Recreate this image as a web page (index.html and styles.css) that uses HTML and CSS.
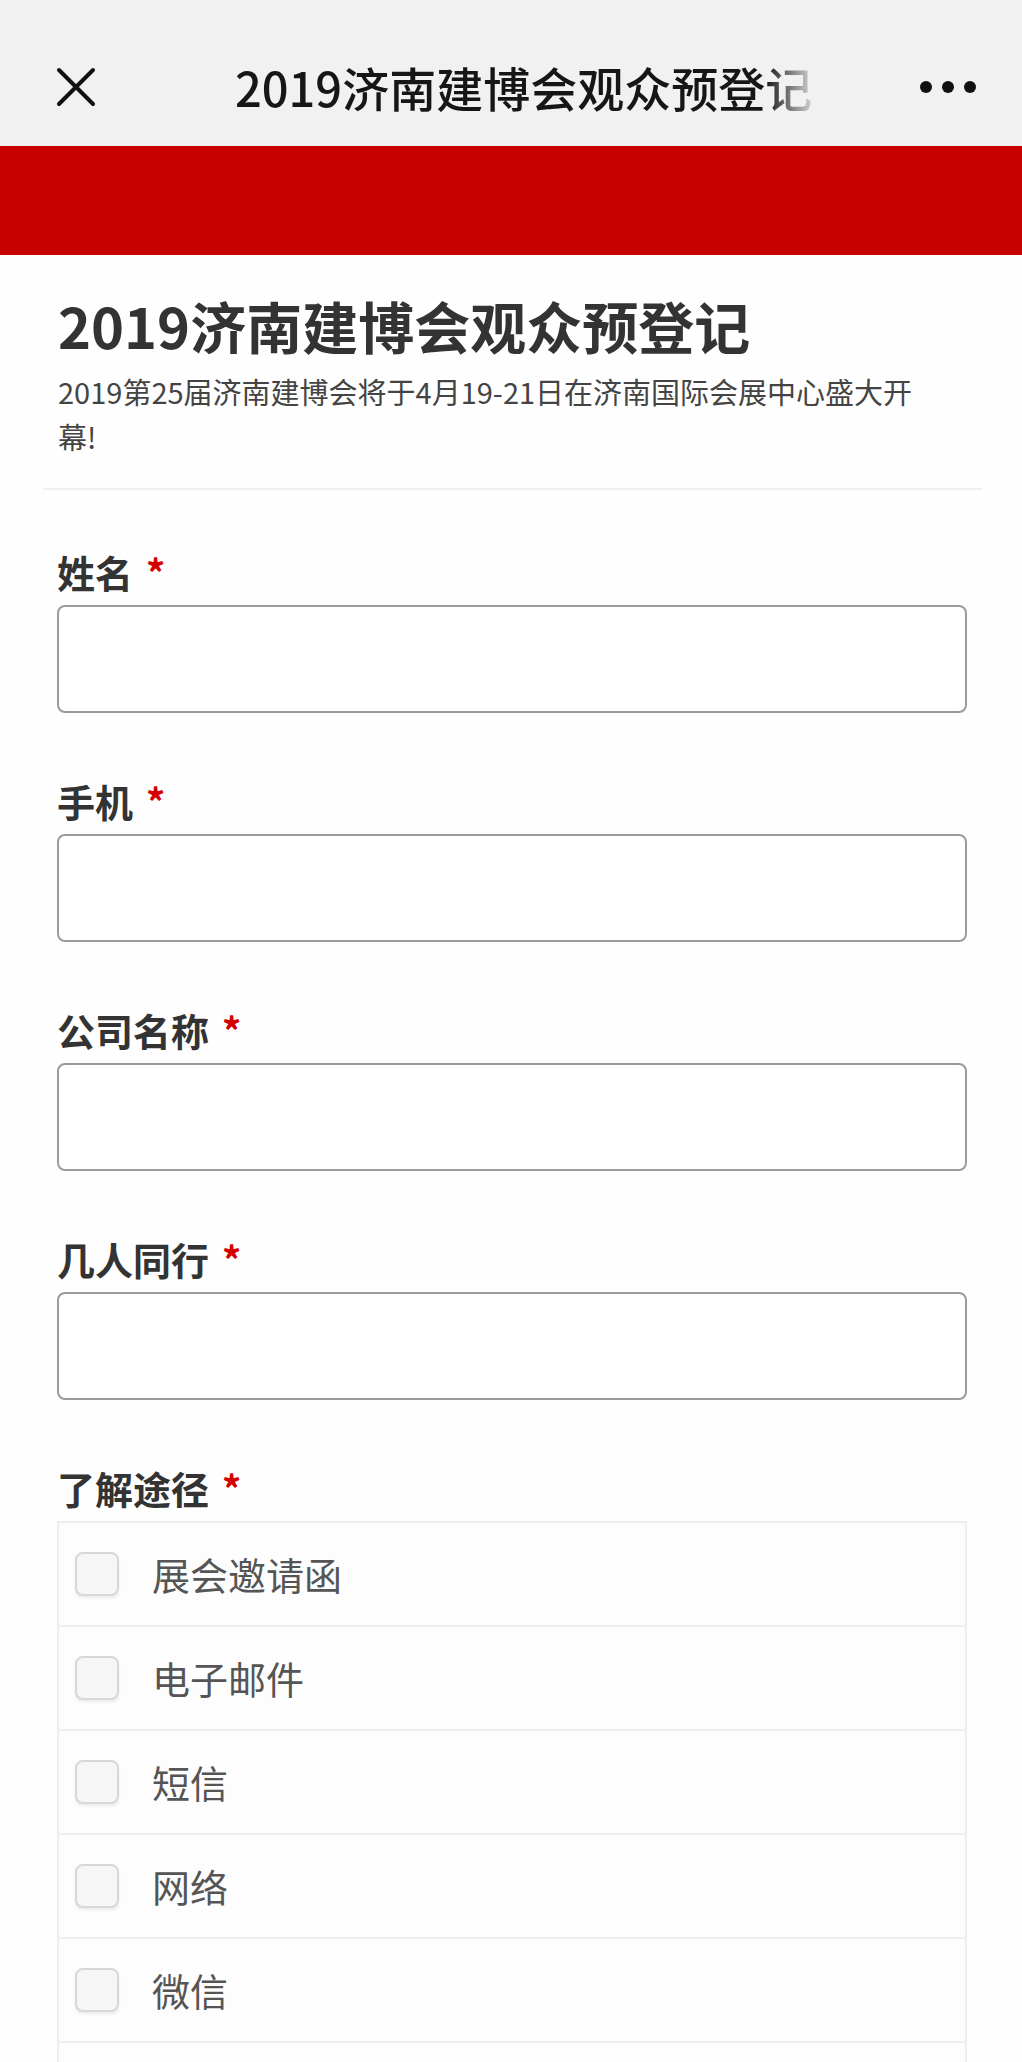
FILE: index.html
```html
<!DOCTYPE html>
<html lang="zh-CN">
<head>
<meta charset="utf-8">
<title>2019济南建博会观众预登记</title>
<link rel="stylesheet" href="styles.css">
</head>
<body>
<div class="topbar">
  <span class="close" aria-label="关闭">
    <svg width="42" height="42" viewBox="0 0 42 42"><path d="M4 4 L38 38 M38 4 L4 38" stroke="#111" stroke-width="4" stroke-linecap="round" fill="none"/></svg>
  </span>
  <div class="tb-title"><span>2019济南建博会观众预登记</span></div>
  <span class="more" aria-label="更多"><i></i><i></i><i></i></span>
</div>
<div class="banner"></div>
<main class="form">
  <header class="form-head">
    <h1 class="form-title">2019济南建博会观众预登记</h1>
    <p class="form-desc">2019第25届济南建博会将于4月19-21日在济南国际会展中心盛大开幕!</p>
  </header>
  <div class="fields">
    <div class="field">
      <div class="lbl">姓名<span class="req">*</span></div>
      <div class="input"></div>
    </div>
    <div class="field">
      <div class="lbl">手机<span class="req">*</span></div>
      <div class="input"></div>
    </div>
    <div class="field">
      <div class="lbl">公司名称<span class="req">*</span></div>
      <div class="input"></div>
    </div>
    <div class="field">
      <div class="lbl">几人同行<span class="req">*</span></div>
      <div class="input"></div>
    </div>
    <div class="field">
      <div class="lbl">了解途径<span class="req">*</span></div>
      <ul class="options">
        <li class="opt"><span class="cb"></span><span class="opt-text">展会邀请函</span></li>
        <li class="opt"><span class="cb"></span><span class="opt-text">电子邮件</span></li>
        <li class="opt"><span class="cb"></span><span class="opt-text">短信</span></li>
        <li class="opt"><span class="cb"></span><span class="opt-text">网络</span></li>
        <li class="opt"><span class="cb"></span><span class="opt-text">微信</span></li>
        <li class="opt"><span class="cb"></span><span class="opt-text">其他</span></li>
      </ul>
    </div>
  </div>
</main>
</body>
</html>
```
FILE: styles.css
```css
html, body {
  margin: 0;
  padding: 0;
  background: #fefefe;
}
body {
  font-family: "Noto Sans CJK SC", "Noto Sans", sans-serif;
  color: #333;
}
.topbar {
  height: 146px;
  background: #f1f1f1;
  display: flex;
  align-items: center;
  padding-left: 55px;
  padding-top: 28px;
  box-sizing: border-box;
}
.close {
  width: 42px;
  height: 42px;
  display: block;
}
.close svg { display: block; }
.tb-title {
  margin-left: 138px;
  width: 578px;
  overflow: hidden;
  white-space: nowrap;
  font-size: 47px;
  font-weight: 500;
  color: #161616;
  line-height: 60px;
  -webkit-mask-image: linear-gradient(to right, #000 calc(100% - 48px), rgba(0,0,0,0.12) 100%);
  mask-image: linear-gradient(to right, #000 calc(100% - 48px), rgba(0,0,0,0.12) 100%);
}
.more {
  margin-left: 107px;
  display: flex;
  gap: 10px;
}
.more i {
  width: 12px;
  height: 12px;
  border-radius: 50%;
  background: #111;
  display: block;
}
.banner {
  height: 109px;
  background: #c70000;
}
.form {
  padding: 0 40px 0 43px;
}
.form-head {
  padding: 37px 15px 29px;
  border-bottom: 2px solid #f0f0f0;
}
.form-title {
  margin: 0;
  font-size: 56px;
  line-height: 66px;
  font-weight: 700;
  color: #333;
}
.form-desc {
  margin: 11px 0 0;
  font-size: 29px;
  line-height: 45px;
  color: #444;
  padding-right: 30px;
}
.fields {
  padding: 60px 15px 0 14px;
}
.field {
  margin-bottom: 66px;
}
.lbl {
  font-size: 38px;
  line-height: 44px;
  font-weight: 700;
  color: #333;
  margin-bottom: 11px;
}
.req {
  color: #d40000;
  margin-left: 13px;
  font-weight: 700;
}
.input {
  height: 108px;
  border: 2.5px solid #9b9b9b;
  border-radius: 8px;
  background: #fff;
  box-sizing: border-box;
}
.options {
  list-style: none;
  margin: 0;
  padding: 0;
  border: 2px solid #eeeeee;
  border-bottom: none;
}
.opt {
  height: 104px;
  border-bottom: 2px solid #eeeeee;
  box-sizing: border-box;
  display: flex;
  align-items: center;
  padding-left: 16px;
  background: #fdfdfd;
}
.cb {
  width: 44px;
  height: 44px;
  border: 2px solid #d8d8d8;
  border-radius: 8px;
  background: #f6f6f7;
  box-sizing: border-box;
  box-shadow: 0 2px 3px rgba(0,0,0,0.08);
  flex: none;
}
.opt-text {
  margin-left: 33px;
  font-size: 38px;
  color: #555;
  line-height: 44px;
}
```
